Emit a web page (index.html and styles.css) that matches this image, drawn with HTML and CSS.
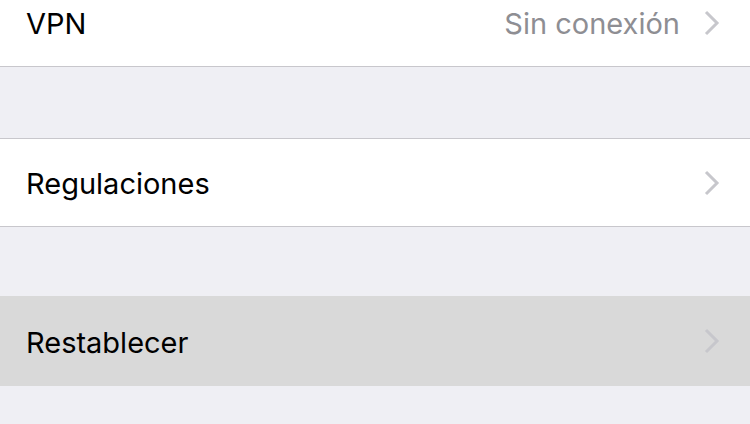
FILE: index.html
```
<!DOCTYPE html>
<html lang="es">
<head>
<meta charset="utf-8">
<link rel="stylesheet" href="styles.css">
</head>
<body>
<div class="list">
  <div class="group first">
    <div class="row">
      <span class="label">VPN</span>
      <span class="detail">Sin conexión</span>
      <svg class="chev" viewBox="0 0 16 26" width="16" height="26"><path d="M2 2 L13 13 L2 24" fill="none" stroke="#c7c7cc" stroke-width="3"/></svg>
    </div>
  </div>
  <div class="group second">
    <div class="row">
      <span class="label">Regulaciones</span>
      <svg class="chev" viewBox="0 0 16 26" width="16" height="26"><path d="M2 2 L13 13 L2 24" fill="none" stroke="#c7c7cc" stroke-width="3"/></svg>
    </div>
  </div>
  <div class="group third selected">
    <div class="row">
      <span class="label">Restablecer</span>
      <svg class="chev" viewBox="0 0 16 26" width="16" height="26"><path d="M2 2 L13 13 L2 24" fill="none" stroke="#c7c7cc" stroke-width="3"/></svg>
    </div>
  </div>
</div>
</body>
</html>
```
FILE: styles.css
```
html, body {
  margin: 0;
  padding: 0;
  background: #efeff4;
  width: 750px;
  height: 424px;
  overflow: hidden;
  font-family: "Inter", "Liberation Sans", sans-serif;
}
.list {
  margin-top: -21px;
}
.group {
  background: #ffffff;
  border-top: 1px solid #c8c7cc;
  border-bottom: 1px solid #c8c7cc;
}
.first {
  border-top: none;
}
.second {
  margin-top: 71px;
}
.third {
  margin-top: 69px;
}
.selected {
  background: #d9d9d9;
  border-color: #d9d9d9;
}
.row {
  height: 87px;
  display: flex;
  align-items: center;
  padding: 0 30px 0 26px;
}
.selected .row {
  height: 88px;
}
.label {
  flex: 1;
  font-size: 29px;
  color: #000000;
  padding-top: 2px;
}
.detail {
  font-size: 29px;
  color: #8e8e93;
  margin-right: 24px;
  padding-top: 2px;
}
.chev {
  display: block;
}
```
